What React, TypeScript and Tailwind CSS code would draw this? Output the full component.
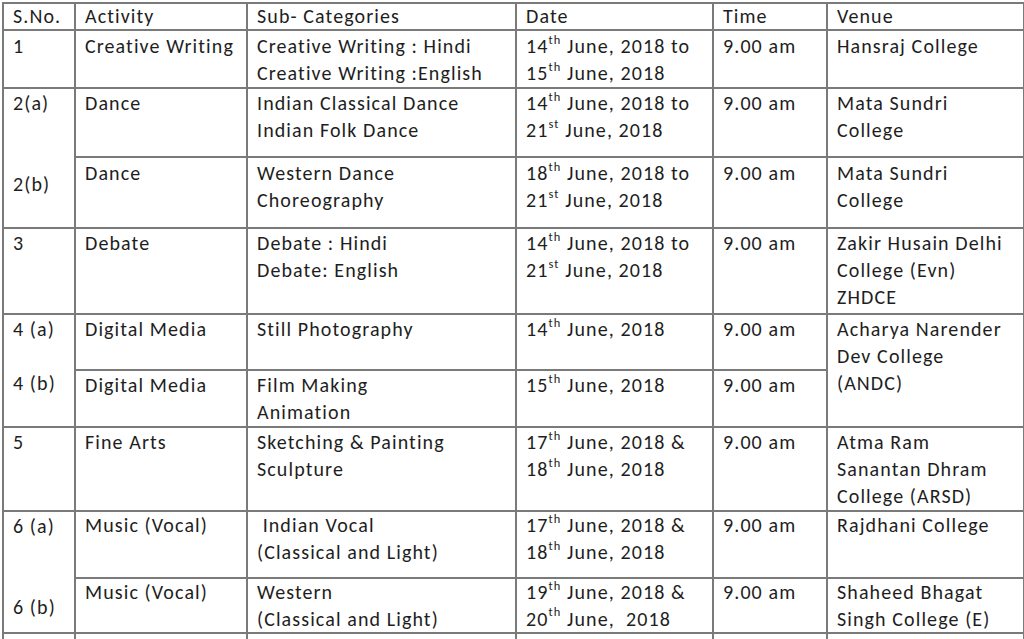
import React from "react";

const Sup = ({ children }: { children: React.ReactNode }) => (
  <sup className="text-[0.62em] relative -top-[0.12em] align-super leading-none">{children}</sup>
);

const td = "border-2 border-[#7a7a7a] align-top pl-[9px] pr-0 pt-[1px] whitespace-nowrap overflow-hidden";

export default function App() {
  return (
    <div
      className="w-[1024px] h-[639px] overflow-hidden bg-white pl-[2px] pt-[2px] text-[#1e1e1e]"
      style={{ fontFamily: "Carlito, Calibri, Lato, 'Open Sans', sans-serif" }}
    >
      <table className="table-fixed border-collapse w-[1021px] text-[20px] leading-[27px] tracking-[1.1px]">
        <colgroup>
          <col className="w-[72px]" />
          <col className="w-[172px]" />
          <col className="w-[269px]" />
          <col className="w-[197px]" />
          <col className="w-[114px]" />
          <col className="w-[197px]" />
        </colgroup>
        <tbody>
          <tr className="h-[26px]">
            <td className={td + " !pt-0 leading-[25px]"}>S.No.</td>
            <td className={td + " !pt-0 leading-[25px]"}>Activity</td>
            <td className={td + " !pt-0 leading-[25px]"}>Sub- Categories</td>
            <td className={td + " !pt-0 leading-[25px]"}>Date</td>
            <td className={td + " !pt-0 leading-[25px]"}>Time</td>
            <td className={td + " !pt-0 leading-[25px]"}>Venue</td>
          </tr>
          <tr className="h-[57px]">
            <td className={td + " pt-[2px]"}>1</td>
            <td className={td + " pt-[2px]"}>Creative Writing</td>
            <td className={td + " pt-[2px]"}>
              Creative Writing : Hindi
              <br />
              Creative Writing :English
            </td>
            <td className={td + " pt-[2px]"}>
              14<Sup>th</Sup> June, 2018 to
              <br />
              15<Sup>th</Sup> June, 2018
            </td>
            <td className={td + " pt-[2px]"}>9.00 am</td>
            <td className={td + " pt-[2px]"}>Hansraj College</td>
          </tr>
          <tr className="h-[69px]">
            <td className={td} rowSpan={2}>
              2(a)
              <br />
              <br />
              <br />
              2(b)
            </td>
            <td className={td}>Dance</td>
            <td className={td}>
              Indian Classical Dance
              <br />
              Indian Folk Dance
            </td>
            <td className={td}>
              14<Sup>th</Sup> June, 2018 to
              <br />
              21<Sup>st</Sup> June, 2018
            </td>
            <td className={td}>9.00 am</td>
            <td className={td}>
              Mata Sundri
              <br />
              College
            </td>
          </tr>
          <tr className="h-[71px]">
            <td className={td + " pt-[2px]"}>Dance</td>
            <td className={td + " pt-[2px]"}>
              Western Dance
              <br />
              Choreography
            </td>
            <td className={td + " pt-[2px]"}>
              18<Sup>th</Sup> June, 2018 to
              <br />
              21<Sup>st</Sup> June, 2018
            </td>
            <td className={td + " pt-[2px]"}>9.00 am</td>
            <td className={td + " pt-[2px]"}>
              Mata Sundri
              <br />
              College
            </td>
          </tr>
          <tr className="h-[86px]">
            <td className={td}>3</td>
            <td className={td}>Debate</td>
            <td className={td}>
              Debate : Hindi
              <br />
              Debate: English
            </td>
            <td className={td}>
              14<Sup>th</Sup> June, 2018 to
              <br />
              21<Sup>st</Sup> June, 2018
            </td>
            <td className={td}>9.00 am</td>
            <td className={td}>
              Zakir Husain Delhi
              <br />
              College (Evn)
              <br />
              ZHDCE
            </td>
          </tr>
          <tr className="h-[56px]">
            <td className={td} rowSpan={2}>
              4 (a)
              <br />
              <br />
              4 (b)
            </td>
            <td className={td}>Digital Media</td>
            <td className={td}>Still Photography</td>
            <td className={td}>
              14<Sup>th</Sup> June, 2018
            </td>
            <td className={td}>9.00 am</td>
            <td className={td} rowSpan={2}>
              Acharya Narender
              <br />
              Dev College
              <br />
              (ANDC)
            </td>
          </tr>
          <tr className="h-[56px]">
            <td className={td}>Digital Media</td>
            <td className={td}>
              Film Making
              <br />
              Animation
            </td>
            <td className={td}>
              15<Sup>th</Sup> June, 2018
            </td>
            <td className={td}>9.00 am</td>
          </tr>
          <tr className="h-[84px]">
            <td className={td}>5</td>
            <td className={td}>Fine Arts</td>
            <td className={td}>
              Sketching &amp; Painting
              <br />
              Sculpture
            </td>
            <td className={td}>
              17<Sup>th</Sup> June, 2018 &amp;
              <br />
              18<Sup>th</Sup> June, 2018
            </td>
            <td className={td}>9.00 am</td>
            <td className={td}>
              Atma Ram
              <br />
              Sanantan Dhram
              <br />
              College (ARSD)
            </td>
          </tr>
          <tr className="h-[67px]">
            <td className={td} rowSpan={2}>
              6 (a)
              <br />
              <br />
              <br />
              6 (b)
            </td>
            <td className={td + " !pt-0"}>Music (Vocal)</td>
            <td className={td + " !pt-0"}>
              {"\u00a0"}Indian Vocal
              <br />
              (Classical and Light)
            </td>
            <td className={td + " !pt-0"}>
              17<Sup>th</Sup> June, 2018 &amp;
              <br />
              18<Sup>th</Sup> June, 2018
            </td>
            <td className={td + " !pt-0"}>9.00 am</td>
            <td className={td + " !pt-0"}>Rajdhani College</td>
          </tr>
          <tr className="h-[55px]">
            <td className={td + " !pt-0 leading-[26.5px]"}>Music (Vocal)</td>
            <td className={td + " !pt-0 leading-[26.5px]"}>
              Western
              <br />
              (Classical and Light)
            </td>
            <td className={td + " !pt-0 leading-[26.5px]"}>
              19<Sup>th</Sup> June, 2018 &amp;
              <br />
              20<Sup>th</Sup> June,{"\u00a0\u00a0"}2018
            </td>
            <td className={td + " !pt-0 leading-[26.5px]"}>9.00 am</td>
            <td className={td + " !pt-0 leading-[26.5px]"}>
              Shaheed Bhagat
              <br />
              Singh College (E)
            </td>
          </tr>
          <tr className="h-[60px]">
            <td className={td + " pt-[12px]"}>7</td>
            <td className={td + " pt-[12px]"}>Music (Inst.)</td>
            <td className={td + " pt-[12px]"}>Instrumental</td>
            <td className={td + " pt-[12px]"}>
              21<Sup>st</Sup> June, 2018
            </td>
            <td className={td + " pt-[12px]"}>9.00 am</td>
            <td className={td + " pt-[12px]"}>College</td>
          </tr>
        </tbody>
      </table>
    </div>
  );
}
